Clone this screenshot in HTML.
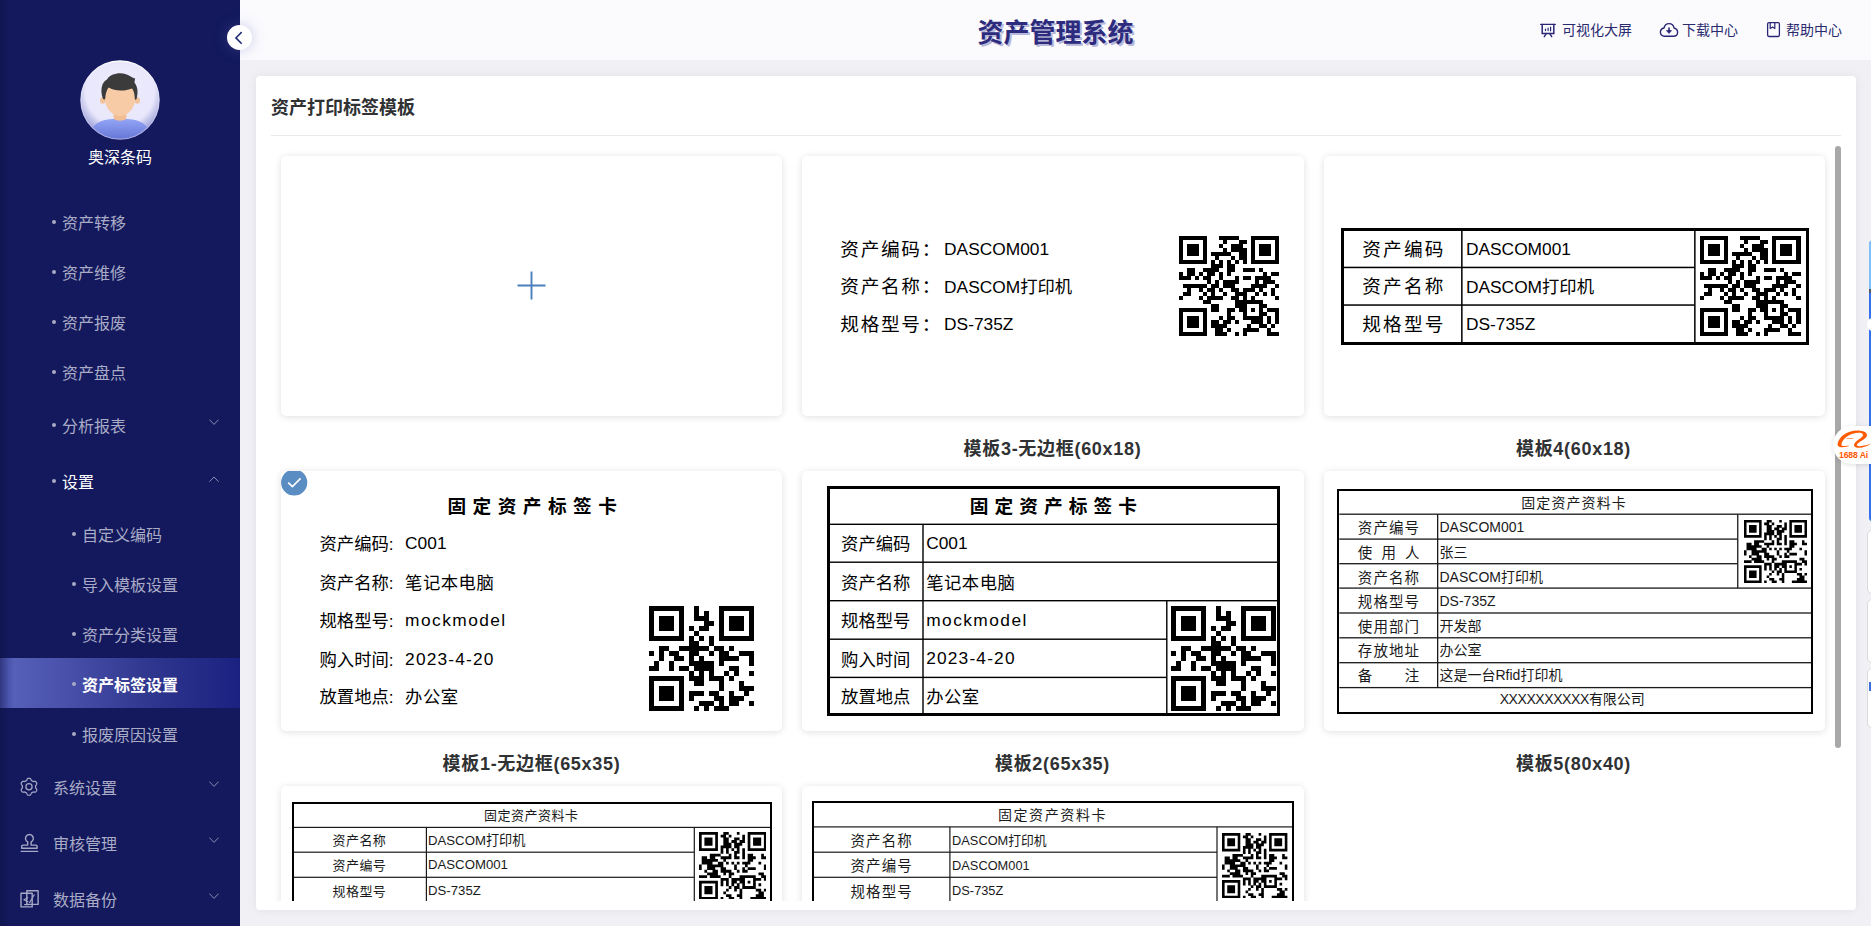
<!DOCTYPE html>
<html lang="zh-CN">
<head>
<meta charset="utf-8">
<title>资产管理系统</title>
<style>
*{box-sizing:border-box;margin:0;padding:0}
html,body{width:1871px;height:926px;overflow:hidden}
body{position:relative;background:#f1f1f5;font-family:"Liberation Sans","Noto Sans CJK SC",sans-serif;color:#000;-webkit-font-smoothing:antialiased}
.abs{position:absolute}
/* sidebar */
#side{position:absolute;left:0;top:0;width:240px;height:926px;background:#13195c;z-index:5}
#avatar{position:absolute;left:80px;top:59.7px;width:80px;height:80px}
#uname{position:absolute;left:0;top:147px;width:240px;text-align:center;color:#fff;font-size:16px;line-height:22px}
.mi{position:absolute;left:0;width:240px;color:#aaacc7;font-size:16px;white-space:nowrap}
.mi .t{position:absolute;top:0;height:100%;display:flex;align-items:center;padding-top:2px}
.mi.h50{height:50px}
.mi.h56{height:56px}
.mi .dot{position:absolute;top:50%;width:4px;height:4px;border-radius:50%;background:#a9abc6;margin-top:-1px}
.mi.on{color:#fff}
.mi.act{color:#fff;font-weight:bold;background:linear-gradient(90deg,#3d4499 0,#5560b8 6%,#4a52ac 25%,#31388f 60%,#1a2181 100%)}
.chev{position:absolute;left:209.2px;width:10px;height:6.4px}
/* header */
#head{position:absolute;left:240px;top:0;width:1631px;height:60px;background:#fbfbfe}
#ttl{position:absolute;left:0;top:13px;width:1631px;text-align:center;font-size:26px;line-height:40px;font-weight:bold;color:#2c2b7d;text-shadow:2px 2px 0 #b9b8d8;letter-spacing:0}
.hl{position:absolute;top:20px;font-size:14px;line-height:20px;color:#2a2a6e;white-space:nowrap}
#colbtn{position:absolute;left:227px;top:25px;width:25px;height:25px;border-radius:50%;background:#fff;box-shadow:0 0 14px rgba(110,105,190,.35);z-index:9}
/* main */
#main{position:absolute;left:256px;top:76px;width:1600px;height:834px;background:#fff;border-radius:4px;box-shadow:0 0 10px rgba(150,150,175,.2)}
#ptitle{position:absolute;left:15px;top:19px;font-size:18px;line-height:26px;font-weight:bold;color:#303133}
#pline{position:absolute;left:15px;top:58.5px;width:1570px;height:1px;background:#ebebef}
#scroll{position:absolute;left:15px;top:70px;width:1570px;height:754.5px;overflow:hidden}
.card{position:absolute;width:501.3px;height:260px;background:#fff;border-radius:5px;box-shadow:0 1px 7px rgba(0,0,0,.13);overflow:hidden}
.cap{position:absolute;width:521px;text-align:center;font-size:18px;line-height:26px;font-weight:bold;color:#303133;letter-spacing:.7px;margin-top:1px}
.lab{position:absolute;color:#000;white-space:nowrap}
.ep{left:1866.6px;width:8px;background:#fff;border:1px solid #d9d9de;border-radius:5px 0 0 5px}
#sbar{position:absolute;left:1563.8px;top:0;width:6px;height:602px;border-radius:3px;background:#a8a8a8}
</style>
</head>
<body>
<div id="head">
  <div id="ttl">资产管理系统</div>

  <svg class="abs" style="left:1299px;top:21px;width:18px;height:18px" viewBox="0 0 18 18"><g fill="none" stroke="#2b2776" stroke-width="1.3" stroke-linecap="round"><path d="M1.7 3.4 H16.3"/><path d="M3.2 3.6 V12.5 H14.8 V3.6" stroke-width="1.5"/><path d="M7.2 12.6 L5.3 15.7 M10.8 12.6 L12.7 15.7" stroke-width="1.4"/><path d="M6.5 8 V9.6 M9.1 7.1 V9.6 M11.6 6.1 V9.8" stroke-width="1.2"/></g></svg>
  <svg class="abs" style="left:1418px;top:20px;width:22px;height:20px" viewBox="0 0 22 20"><g fill="none" stroke="#2b2776" stroke-width="1.4" stroke-linejoin="round"><path d="M6.6 16.3 C3.8 16.3 2.4 14.3 2.4 12.2 C2.4 10 4 8.4 6 8 C6.6 5.2 8.6 3.6 11 3.6 C13.6 3.6 15.6 5.2 16 8 C18.2 8.6 19.6 10.2 19.6 12.3 C19.6 14.5 18 16.3 15.4 16.3 Z"/><path d="M11 7.4 V11.6" stroke-width="1.6"/><path d="M8.5 10.6 H13.5 L11 13.4Z" fill="#2b2776" stroke-width="0.8"/></g></svg>
  <svg class="abs" style="left:1525px;top:20px;width:16px;height:20px" viewBox="0 0 16 20"><g fill="none" stroke="#2b2776" stroke-width="1.3" stroke-linejoin="round"><rect x="2.6" y="2.6" width="11.8" height="13.9" rx="1.4"/><path d="M5.2 2.8 V8.6 L7.5 7 L9.8 8.6 V2.8" stroke-width="1.2"/></g></svg>
  <div class="hl" style="left:1322px">可视化大屏</div>
  <div class="hl" style="left:1442px">下载中心</div>
  <div class="hl" style="left:1546px">帮助中心</div>
</div>
<div id="side">
<div class="abs" style="left:0;top:0;width:9px;height:926px;background:linear-gradient(90deg,rgba(8,10,40,.22),rgba(8,10,40,0));z-index:2"></div>
<svg id="avatar" viewBox="0 0 80 80" width="80" height="80">
<defs>
<radialGradient id="avbg" cx="50%" cy="38%" r="62%"><stop offset="0" stop-color="#efeefe"/><stop offset="0.72" stop-color="#e8e7fb"/><stop offset="0.9" stop-color="#b4b5e4"/><stop offset="1" stop-color="#8e90d0"/></radialGradient>
<linearGradient id="avrim" x1="0" y1="0" x2="0" y2="1"><stop offset="0" stop-color="#ffffff"/><stop offset="0.5" stop-color="#dcdcf6"/><stop offset="1" stop-color="#a9abe2"/></linearGradient>
<linearGradient id="shirt" x1="0" y1="0" x2="0" y2="1"><stop offset="0" stop-color="#93a5f6"/><stop offset="1" stop-color="#5f6fd2"/></linearGradient>
<clipPath id="avc"><circle cx="40" cy="40" r="38.6"/></clipPath>
</defs>
<circle cx="40" cy="40" r="39.7" fill="url(#avrim)"/>
<circle cx="40" cy="40" r="38.6" fill="url(#avbg)"/>
<g clip-path="url(#avc)">
<path d="M12 70 C14 62 24 59.5 33 59 L47 59 C56 59.5 66 62 68 70 L68 82 L12 82Z" fill="url(#shirt)"/>
<path d="M33.6 52 L33.6 58.5 C36 61.5 44 61.5 46.4 58.5 L46.4 52Z" fill="#f3bd94"/>
<ellipse cx="22.6" cy="40.5" rx="2.6" ry="3.2" fill="#f3c29b"/>
<ellipse cx="57.4" cy="40.5" rx="2.6" ry="3.2" fill="#f3c29b"/>
<path d="M24.4 36 C24.4 25 30 21 40 21 C50 21 55.6 25 55.6 36 C55.6 47 49 56 40 56 C31 56 24.4 47 24.4 36Z" fill="#f7cba6"/>
<path d="M22.8 38.5 C20 30 21.5 22.5 27 19.5 C30 14 39 12 46 14.2 C49.5 15.3 52 17.6 55.2 18.5 C54.6 20 54.8 21.5 54.4 22.6 C57.6 26.5 58.4 32 56.6 38.8 C55.8 40.4 55 39.8 54.8 38.4 C54.6 34 54 31 52 28.4 C46 31 35 31.6 28.6 27.6 C26.6 30 25.6 34 25.2 38.4 C25 39.8 23.6 40.2 22.8 38.5Z" fill="#3b3b3b"/>
</g>
</svg>
<div id="uname">奥深条码</div>
<div class="mi h50 " style="top:196px"><span class="dot" style="left:51.5px"></span><span class="t" style="left:62px">资产转移</span></div>
<div class="mi h50 " style="top:246px"><span class="dot" style="left:51.5px"></span><span class="t" style="left:62px">资产维修</span></div>
<div class="mi h50 " style="top:296px"><span class="dot" style="left:51.5px"></span><span class="t" style="left:62px">资产报废</span></div>
<div class="mi h50 " style="top:346px"><span class="dot" style="left:51.5px"></span><span class="t" style="left:62px">资产盘点</span></div>
<div class="mi h56 " style="top:396px"><span class="dot" style="left:51.5px"></span><span class="t" style="left:62px">分析报表</span><svg class="chev" style="top:23.4px" viewBox="0 0 10 6.4"><path d="M0.4 0.6 L5 5.4 L9.6 0.6" fill="none" stroke="#8b8fb4" stroke-width="1"/></svg></div>
<div class="mi h56 on" style="top:452px"><span class="dot" style="left:51.5px"></span><span class="t" style="left:62px">设置</span><svg class="chev" style="top:24.2px" viewBox="0 0 10 6.4"><path d="M0.4 5.8 L5 1 L9.6 5.8" fill="none" stroke="#8b8fb4" stroke-width="1"/></svg></div>
<div class="mi h50 " style="top:508px"><span class="dot" style="left:71.5px"></span><span class="t" style="left:82px">自定义编码</span></div>
<div class="mi h50 " style="top:558px"><span class="dot" style="left:71.5px"></span><span class="t" style="left:82px">导入模板设置</span></div>
<div class="mi h50 " style="top:608px"><span class="dot" style="left:71.5px"></span><span class="t" style="left:82px">资产分类设置</span></div>
<div class="mi h50 act" style="top:658px"><span class="dot" style="left:71.5px"></span><span class="t" style="left:82px">资产标签设置</span></div>
<div class="mi h50 " style="top:708px"><span class="dot" style="left:71.5px"></span><span class="t" style="left:82px">报废原因设置</span></div>
<div class="mi h56 " style="top:758px"><svg viewBox="0 0 20 20" style="position:absolute;left:19px;top:19px;width:20px;height:20px"><g fill="none" stroke="#a6a8c6" stroke-width="1.25" stroke-linejoin="round"><path d="M16.60 9.75 L16.59 9.40 L16.56 9.06 L16.63 8.70 L16.95 8.27 L17.29 7.80 L17.60 7.28 L17.83 6.74 L17.77 6.29 L17.57 5.89 L17.36 5.50 L17.13 5.12 L16.88 4.75 L16.52 4.47 L15.94 4.40 L15.34 4.41 L14.76 4.47 L14.22 4.53 L13.88 4.41 L13.59 4.21 L13.30 4.03 L13.00 3.87 L12.68 3.72 L12.41 3.48 L12.20 2.99 L11.95 2.46 L11.66 1.93 L11.31 1.47 L10.89 1.30 L10.44 1.26 L10.00 1.25 L9.56 1.26 L9.11 1.30 L8.69 1.47 L8.34 1.93 L8.05 2.46 L7.80 2.99 L7.59 3.48 L7.32 3.72 L7.00 3.87 L6.70 4.03 L6.41 4.21 L6.12 4.41 L5.78 4.53 L5.24 4.47 L4.66 4.41 L4.06 4.40 L3.48 4.47 L3.12 4.75 L2.87 5.12 L2.64 5.50 L2.43 5.89 L2.23 6.29 L2.17 6.74 L2.40 7.28 L2.71 7.80 L3.05 8.27 L3.37 8.70 L3.44 9.06 L3.41 9.40 L3.40 9.75 L3.41 10.10 L3.44 10.44 L3.37 10.80 L3.05 11.23 L2.71 11.70 L2.40 12.22 L2.17 12.76 L2.23 13.21 L2.43 13.61 L2.64 14.00 L2.87 14.38 L3.12 14.75 L3.48 15.03 L4.06 15.10 L4.66 15.09 L5.24 15.03 L5.78 14.97 L6.12 15.09 L6.41 15.29 L6.70 15.47 L7.00 15.63 L7.32 15.78 L7.59 16.02 L7.80 16.51 L8.05 17.04 L8.34 17.57 L8.69 18.03 L9.11 18.20 L9.56 18.24 L10.00 18.25 L10.44 18.24 L10.89 18.20 L11.31 18.03 L11.66 17.57 L11.95 17.04 L12.20 16.51 L12.41 16.02 L12.68 15.78 L13.00 15.63 L13.30 15.47 L13.59 15.29 L13.88 15.09 L14.22 14.97 L14.76 15.03 L15.34 15.09 L15.94 15.10 L16.52 15.03 L16.88 14.75 L17.13 14.38 L17.36 14.00 L17.57 13.61 L17.77 13.21 L17.83 12.76 L17.60 12.22 L17.29 11.70 L16.95 11.23 L16.63 10.80 L16.56 10.44 L16.59 10.10Z"/><circle cx="10" cy="9.75" r="3.1"/></g></svg><span class="t" style="left:53px">系统设置</span><svg class="chev" style="top:23.4px" viewBox="0 0 10 6.4"><path d="M0.4 0.6 L5 5.4 L9.6 0.6" fill="none" stroke="#8b8fb4" stroke-width="1"/></svg></div>
<div class="mi h56 " style="top:814px"><svg viewBox="0 0 20 20" style="position:absolute;left:19px;top:19px;width:20px;height:20px"><g fill="none" stroke="#a6a8c6" stroke-width="1.4" stroke-linejoin="round" stroke-linecap="round"><path d="M2.7 15.3 V13.3 a1.2 1.2 0 0 1 1.2-1.2 H8.7 V8.95 A3.9 3.9 0 1 1 12.1 8.95 V12.1 H16.9 a1.2 1.2 0 0 1 1.2 1.2 V15.3 Z"/><path d="M2.2 18.4 H18.6"/></g></svg><span class="t" style="left:53px">审核管理</span><svg class="chev" style="top:23.4px" viewBox="0 0 10 6.4"><path d="M0.4 0.6 L5 5.4 L9.6 0.6" fill="none" stroke="#8b8fb4" stroke-width="1"/></svg></div>
<div class="mi h56 " style="top:870px"><svg viewBox="0 0 20 20" style="position:absolute;left:19px;top:19px;width:20px;height:20px"><g fill="none" stroke="#a6a8c6" stroke-width="1.4" stroke-linejoin="round" stroke-linecap="round"><path d="M7.8 1.7 H19.1 V15.4 H7.8Z"/><path d="M2 4.2 H13.2 V17.9 H2Z"/><path d="M15.2 5.8 L10.6 13.6 M8.8 8.8 L4.9 10.8 L8.8 12.8 M5.6 15.6 H9.8" stroke-width="1.2"/></g></svg><span class="t" style="left:53px">数据备份</span><svg class="chev" style="top:23.4px" viewBox="0 0 10 6.4"><path d="M0.4 0.6 L5 5.4 L9.6 0.6" fill="none" stroke="#8b8fb4" stroke-width="1"/></svg></div>
</div>
<div id="colbtn"><svg viewBox="0 0 25 25" width="25" height="25"><path d="M14.7 7.1 L8.9 12.9 L14.7 18.7" fill="none" stroke="#1d2a70" stroke-width="1.5"/></svg></div>
<div id="main">
  <div id="ptitle">资产打印标签模板</div>
  <div id="pline"></div>
  <div id="scroll">
    <div class="card" style="left:10px;top:10px" id="c1"><!--c1--><svg class="abs" style="left:236px;top:114.8px;width:29px;height:29px" viewBox="0 0 29 29"><path d="M14.5 0.5V28.5M0.5 14.5H28.5" stroke="#4d7fbd" stroke-width="1.9" fill="none"/></svg><!--/c1--></div>
    <div class="card" style="left:531.3px;top:10px" id="c2"><!--c2--><div class="lab" style="top:80.0px;font-size:18.67px;line-height:28px;letter-spacing:1.7px;left:38.0px;">资产编码：</div><div class="lab" style="top:79.8px;font-size:17.33px;line-height:26px;left:141.8px;">DASCOM001</div><div class="lab" style="top:117.0px;font-size:18.67px;line-height:28px;letter-spacing:1.7px;left:38.0px;">资产名称：</div><div class="lab" style="top:118.0px;font-size:17.33px;line-height:26px;left:141.8px;">DASCOM打印机</div><div class="lab" style="top:154.8px;font-size:18.67px;line-height:28px;letter-spacing:1.7px;left:38.0px;">规格型号：</div><div class="lab" style="top:154.6px;font-size:17.33px;line-height:26px;left:141.8px;">DS-735Z</div><svg class="abs" style="left:376.5px;top:79.6px;width:100.5px;height:100.5px" viewBox="0 0 25 25" shape-rendering="crispEdges"><path d="M0 0h7v1h-7zM10 0h5v1h-5zM18 0h7v1h-7zM0 1h1v1h-1zM6 1h1v1h-1zM11 1h1v1h-1zM15 1h2v1h-2zM18 1h1v1h-1zM24 1h1v1h-1zM0 2h1v1h-1zM2 2h3v1h-3zM6 2h1v1h-1zM10 2h1v1h-1zM13 2h3v1h-3zM18 2h1v1h-1zM20 2h3v1h-3zM24 2h1v1h-1zM0 3h1v1h-1zM2 3h3v1h-3zM6 3h1v1h-1zM11 3h1v1h-1zM13 3h4v1h-4zM18 3h1v1h-1zM20 3h3v1h-3zM24 3h1v1h-1zM0 4h1v1h-1zM2 4h3v1h-3zM6 4h1v1h-1zM8 4h5v1h-5zM15 4h2v1h-2zM18 4h1v1h-1zM20 4h3v1h-3zM24 4h1v1h-1zM0 5h1v1h-1zM6 5h1v1h-1zM9 5h1v1h-1zM13 5h1v1h-1zM15 5h2v1h-2zM18 5h1v1h-1zM24 5h1v1h-1zM0 6h7v1h-7zM8 6h1v1h-1zM10 6h1v1h-1zM12 6h1v1h-1zM14 6h1v1h-1zM16 6h1v1h-1zM18 6h7v1h-7zM8 7h3v1h-3zM12 7h2v1h-2zM2 8h2v1h-2zM6 8h4v1h-4zM12 8h2v1h-2zM16 8h3v1h-3zM20 8h1v1h-1zM0 9h1v1h-1zM2 9h2v1h-2zM5 9h1v1h-1zM7 9h2v1h-2zM10 9h1v1h-1zM12 9h1v1h-1zM21 9h1v1h-1zM23 9h2v1h-2zM0 10h3v1h-3zM4 10h1v1h-1zM6 10h2v1h-2zM10 10h1v1h-1zM14 10h1v1h-1zM16 10h2v1h-2zM19 10h4v1h-4zM7 11h1v1h-1zM9 11h1v1h-1zM11 11h4v1h-4zM19 11h1v1h-1zM21 11h3v1h-3zM1 12h6v1h-6zM8 12h2v1h-2zM11 12h3v1h-3zM18 12h4v1h-4zM24 12h1v1h-1zM2 13h1v1h-1zM5 13h1v1h-1zM7 13h2v1h-2zM10 13h1v1h-1zM13 13h2v1h-2zM16 13h3v1h-3zM20 13h1v1h-1zM23 13h1v1h-1zM1 14h2v1h-2zM6 14h1v1h-1zM8 14h1v1h-1zM11 14h1v1h-1zM14 14h3v1h-3zM19 14h1v1h-1zM21 14h1v1h-1zM23 14h1v1h-1zM0 15h1v1h-1zM5 15h1v1h-1zM7 15h4v1h-4zM13 15h2v1h-2zM16 15h1v1h-1zM18 15h1v1h-1zM24 15h1v1h-1zM6 16h2v1h-2zM14 16h7v1h-7zM8 17h2v1h-2zM14 17h3v1h-3zM20 17h2v1h-2zM0 18h7v1h-7zM8 18h2v1h-2zM12 18h2v1h-2zM15 18h2v1h-2zM18 18h1v1h-1zM20 18h1v1h-1zM22 18h3v1h-3zM0 19h1v1h-1zM6 19h1v1h-1zM12 19h1v1h-1zM16 19h1v1h-1zM20 19h2v1h-2zM24 19h1v1h-1zM0 20h1v1h-1zM2 20h3v1h-3zM6 20h1v1h-1zM10 20h1v1h-1zM12 20h2v1h-2zM16 20h5v1h-5zM22 20h1v1h-1zM24 20h1v1h-1zM0 21h1v1h-1zM2 21h3v1h-3zM6 21h1v1h-1zM8 21h2v1h-2zM11 21h2v1h-2zM14 21h1v1h-1zM18 21h3v1h-3zM22 21h1v1h-1zM24 21h1v1h-1zM0 22h1v1h-1zM2 22h3v1h-3zM6 22h1v1h-1zM8 22h4v1h-4zM17 22h1v1h-1zM20 22h2v1h-2zM23 22h1v1h-1zM0 23h1v1h-1zM6 23h1v1h-1zM9 23h2v1h-2zM12 23h1v1h-1zM16 23h4v1h-4zM22 23h1v1h-1zM0 24h7v1h-7zM9 24h3v1h-3zM14 24h1v1h-1zM16 24h1v1h-1zM22 24h3v1h-3z" fill="#000"/></svg><!--/c2--></div>
    <div class="card" style="left:1052.7px;top:10px" id="c3"><!--c3--><svg class="abs" style="left:0;top:0;width:502px;height:260px" viewBox="0 0 502 260"><rect x="137.10" y="72.00" width="1.50" height="116.60" fill="#000"/><rect x="370.10" y="72.00" width="1.50" height="116.60" fill="#000"/><rect x="17.30" y="110.70" width="353.00" height="1.50" fill="#000"/><rect x="17.30" y="148.30" width="353.00" height="1.50" fill="#000"/></svg><div class="abs" style="left:17.3px;top:72px;width:467.8px;height:116.6px;border:3px solid #000"></div><div class="lab" style="top:80.3px;font-size:18.67px;line-height:28px;letter-spacing:2.2px;left:38.5px;">资产编码</div><div class="lab" style="top:80.1px;font-size:17.33px;line-height:26px;left:142.3px;">DASCOM001</div><div class="lab" style="top:117.4px;font-size:18.67px;line-height:28px;letter-spacing:2.2px;left:38.5px;">资产名称</div><div class="lab" style="top:118.4px;font-size:17.33px;line-height:26px;left:142.3px;">DASCOM打印机</div><div class="lab" style="top:155.2px;font-size:18.67px;line-height:28px;letter-spacing:2.2px;left:38.5px;">规格型号</div><div class="lab" style="top:155.0px;font-size:17.33px;line-height:26px;left:142.3px;">DS-735Z</div><svg class="abs" style="left:376.5px;top:79.6px;width:100.5px;height:100.5px" viewBox="0 0 25 25" shape-rendering="crispEdges"><path d="M0 0h7v1h-7zM10 0h5v1h-5zM18 0h7v1h-7zM0 1h1v1h-1zM6 1h1v1h-1zM11 1h1v1h-1zM15 1h2v1h-2zM18 1h1v1h-1zM24 1h1v1h-1zM0 2h1v1h-1zM2 2h3v1h-3zM6 2h1v1h-1zM10 2h1v1h-1zM13 2h3v1h-3zM18 2h1v1h-1zM20 2h3v1h-3zM24 2h1v1h-1zM0 3h1v1h-1zM2 3h3v1h-3zM6 3h1v1h-1zM11 3h1v1h-1zM13 3h4v1h-4zM18 3h1v1h-1zM20 3h3v1h-3zM24 3h1v1h-1zM0 4h1v1h-1zM2 4h3v1h-3zM6 4h1v1h-1zM8 4h5v1h-5zM15 4h2v1h-2zM18 4h1v1h-1zM20 4h3v1h-3zM24 4h1v1h-1zM0 5h1v1h-1zM6 5h1v1h-1zM9 5h1v1h-1zM13 5h1v1h-1zM15 5h2v1h-2zM18 5h1v1h-1zM24 5h1v1h-1zM0 6h7v1h-7zM8 6h1v1h-1zM10 6h1v1h-1zM12 6h1v1h-1zM14 6h1v1h-1zM16 6h1v1h-1zM18 6h7v1h-7zM8 7h3v1h-3zM12 7h2v1h-2zM2 8h2v1h-2zM6 8h4v1h-4zM12 8h2v1h-2zM16 8h3v1h-3zM20 8h1v1h-1zM0 9h1v1h-1zM2 9h2v1h-2zM5 9h1v1h-1zM7 9h2v1h-2zM10 9h1v1h-1zM12 9h1v1h-1zM21 9h1v1h-1zM23 9h2v1h-2zM0 10h3v1h-3zM4 10h1v1h-1zM6 10h2v1h-2zM10 10h1v1h-1zM14 10h1v1h-1zM16 10h2v1h-2zM19 10h4v1h-4zM7 11h1v1h-1zM9 11h1v1h-1zM11 11h4v1h-4zM19 11h1v1h-1zM21 11h3v1h-3zM1 12h6v1h-6zM8 12h2v1h-2zM11 12h3v1h-3zM18 12h4v1h-4zM24 12h1v1h-1zM2 13h1v1h-1zM5 13h1v1h-1zM7 13h2v1h-2zM10 13h1v1h-1zM13 13h2v1h-2zM16 13h3v1h-3zM20 13h1v1h-1zM23 13h1v1h-1zM1 14h2v1h-2zM6 14h1v1h-1zM8 14h1v1h-1zM11 14h1v1h-1zM14 14h3v1h-3zM19 14h1v1h-1zM21 14h1v1h-1zM23 14h1v1h-1zM0 15h1v1h-1zM5 15h1v1h-1zM7 15h4v1h-4zM13 15h2v1h-2zM16 15h1v1h-1zM18 15h1v1h-1zM24 15h1v1h-1zM6 16h2v1h-2zM14 16h7v1h-7zM8 17h2v1h-2zM14 17h3v1h-3zM20 17h2v1h-2zM0 18h7v1h-7zM8 18h2v1h-2zM12 18h2v1h-2zM15 18h2v1h-2zM18 18h1v1h-1zM20 18h1v1h-1zM22 18h3v1h-3zM0 19h1v1h-1zM6 19h1v1h-1zM12 19h1v1h-1zM16 19h1v1h-1zM20 19h2v1h-2zM24 19h1v1h-1zM0 20h1v1h-1zM2 20h3v1h-3zM6 20h1v1h-1zM10 20h1v1h-1zM12 20h2v1h-2zM16 20h5v1h-5zM22 20h1v1h-1zM24 20h1v1h-1zM0 21h1v1h-1zM2 21h3v1h-3zM6 21h1v1h-1zM8 21h2v1h-2zM11 21h2v1h-2zM14 21h1v1h-1zM18 21h3v1h-3zM22 21h1v1h-1zM24 21h1v1h-1zM0 22h1v1h-1zM2 22h3v1h-3zM6 22h1v1h-1zM8 22h4v1h-4zM17 22h1v1h-1zM20 22h2v1h-2zM23 22h1v1h-1zM0 23h1v1h-1zM6 23h1v1h-1zM9 23h2v1h-2zM12 23h1v1h-1zM16 23h4v1h-4zM22 23h1v1h-1zM0 24h7v1h-7zM9 24h3v1h-3zM14 24h1v1h-1zM16 24h1v1h-1zM22 24h3v1h-3z" fill="#000"/></svg><!--/c3--></div>
    <div class="cap" style="left:521px;top:289px">模板3-无边框(60x18)</div>
    <div class="cap" style="left:1042px;top:289px">模板4(60x18)</div>
    <div class="card" style="left:10px;top:325px" id="c4"><!--c4--><svg class="abs" style="left:0;top:-2.4px;width:27px;height:27px;z-index:3" viewBox="0 0 27 27"><circle cx="13.2" cy="13.5" r="13.1" fill="#5a8dc1"/><path d="M7.2 13.6 L11.4 17.6 L19.6 9.4" fill="none" stroke="#fff" stroke-width="1.7"/></svg><div class="lab" style="top:21.5px;font-size:18.67px;line-height:28px;letter-spacing:6.45px;font-weight:bold;left:166.5px;">固定资产标签卡</div><div class="lab" style="top:59.9px;font-size:17.33px;line-height:26px;left:38.5px;">资产编码:</div><div class="lab" style="top:58.7px;font-size:17.33px;line-height:26px;left:124.1px;">C001</div><div class="lab" style="top:98.7px;font-size:17.33px;line-height:26px;left:38.5px;">资产名称:</div><div class="lab" style="top:98.7px;font-size:17.33px;line-height:26px;letter-spacing:0.5px;left:124.1px;">笔记本电脑</div><div class="lab" style="top:137.2px;font-size:17.33px;line-height:26px;left:38.5px;">规格型号:</div><div class="lab" style="top:136.0px;font-size:17.33px;line-height:26px;letter-spacing:1.44px;left:124.1px;">mockmodel</div><div class="lab" style="top:175.7px;font-size:17.33px;line-height:26px;left:38.5px;">购入时间:</div><div class="lab" style="top:174.5px;font-size:17.33px;line-height:26px;letter-spacing:1.17px;left:124.1px;">2023-4-20</div><div class="lab" style="top:213.2px;font-size:17.33px;line-height:26px;left:38.5px;">放置地点:</div><div class="lab" style="top:213.2px;font-size:17.33px;line-height:26px;letter-spacing:0.5px;left:124.1px;">办公室</div><svg class="abs" style="left:368px;top:135px;width:105px;height:105px" viewBox="0 0 21 21" shape-rendering="crispEdges"><path d="M0 0h7v1h-7zM9 0h1v1h-1zM14 0h7v1h-7zM0 1h1v1h-1zM6 1h1v1h-1zM9 1h1v1h-1zM11 1h1v1h-1zM14 1h1v1h-1zM20 1h1v1h-1zM0 2h1v1h-1zM2 2h3v1h-3zM6 2h1v1h-1zM9 2h3v1h-3zM14 2h1v1h-1zM16 2h3v1h-3zM20 2h1v1h-1zM0 3h1v1h-1zM2 3h3v1h-3zM6 3h1v1h-1zM11 3h2v1h-2zM14 3h1v1h-1zM16 3h3v1h-3zM20 3h1v1h-1zM0 4h1v1h-1zM2 4h3v1h-3zM6 4h1v1h-1zM8 4h1v1h-1zM10 4h2v1h-2zM14 4h1v1h-1zM16 4h3v1h-3zM20 4h1v1h-1zM0 5h1v1h-1zM6 5h1v1h-1zM9 5h1v1h-1zM14 5h1v1h-1zM20 5h1v1h-1zM0 6h7v1h-7zM8 6h1v1h-1zM10 6h1v1h-1zM12 6h1v1h-1zM14 6h7v1h-7zM8 7h2v1h-2zM12 7h1v1h-1zM2 8h2v1h-2zM6 8h6v1h-6zM13 8h2v1h-2zM16 8h1v1h-1zM0 9h1v1h-1zM2 9h1v1h-1zM4 9h2v1h-2zM8 9h2v1h-2zM12 9h1v1h-1zM14 9h2v1h-2zM18 9h3v1h-3zM2 10h1v1h-1zM5 10h2v1h-2zM8 10h1v1h-1zM10 10h1v1h-1zM14 10h4v1h-4zM20 10h1v1h-1zM1 11h1v1h-1zM4 11h1v1h-1zM8 11h5v1h-5zM14 11h1v1h-1zM20 11h1v1h-1zM0 12h2v1h-2zM4 12h1v1h-1zM6 12h2v1h-2zM9 12h4v1h-4zM16 12h2v1h-2zM8 13h1v1h-1zM10 13h1v1h-1zM12 13h1v1h-1zM15 13h1v1h-1zM17 13h1v1h-1zM20 13h1v1h-1zM0 14h7v1h-7zM8 14h3v1h-3zM12 14h3v1h-3zM16 14h1v1h-1zM0 15h1v1h-1zM6 15h1v1h-1zM9 15h2v1h-2zM14 15h1v1h-1zM18 15h1v1h-1zM0 16h1v1h-1zM2 16h3v1h-3zM6 16h1v1h-1zM14 16h1v1h-1zM18 16h3v1h-3zM0 17h1v1h-1zM2 17h3v1h-3zM6 17h1v1h-1zM8 17h3v1h-3zM12 17h2v1h-2zM16 17h1v1h-1zM19 17h1v1h-1zM0 18h1v1h-1zM2 18h3v1h-3zM6 18h1v1h-1zM8 18h1v1h-1zM13 18h2v1h-2zM16 18h3v1h-3zM0 19h1v1h-1zM6 19h1v1h-1zM10 19h3v1h-3zM14 19h1v1h-1zM16 19h2v1h-2zM20 19h1v1h-1zM0 20h7v1h-7zM9 20h1v1h-1zM11 20h1v1h-1zM13 20h3v1h-3z" fill="#000"/></svg><!--/c4--></div>
    <div class="card" style="left:531.3px;top:325px" id="c5"><!--c5--><svg class="abs" style="left:0;top:0;width:502px;height:260px" viewBox="0 0 502 260"><rect x="25.70" y="52.60" width="450.00" height="1.40" fill="#000"/><rect x="25.70" y="90.50" width="450.00" height="1.40" fill="#000"/><rect x="25.70" y="129.00" width="450.00" height="1.40" fill="#000"/><rect x="25.70" y="167.50" width="339.10" height="1.40" fill="#000"/><rect x="25.70" y="205.70" width="339.10" height="1.40" fill="#000"/><rect x="120.30" y="53.30" width="1.40" height="191.70" fill="#000"/><rect x="364.10" y="129.70" width="1.40" height="115.30" fill="#000"/></svg><div class="abs" style="left:24.8px;top:15.3px;width:452.5px;height:230.1px;border:3px solid #000"></div><div class="lab" style="top:21.6px;font-size:18.67px;line-height:28px;letter-spacing:6.1px;font-weight:bold;left:167.4px;">固定资产标签卡</div><div class="lab" style="top:60.4px;font-size:17.33px;line-height:26px;left:38.8px;">资产编码</div><div class="lab" style="top:59.2px;font-size:17.33px;line-height:26px;left:123.9px;">C001</div><div class="lab" style="top:98.8px;font-size:17.33px;line-height:26px;left:38.8px;">资产名称</div><div class="lab" style="top:98.8px;font-size:17.33px;line-height:26px;letter-spacing:0.5px;left:123.9px;">笔记本电脑</div><div class="lab" style="top:137.2px;font-size:17.33px;line-height:26px;left:38.8px;">规格型号</div><div class="lab" style="top:136.0px;font-size:17.33px;line-height:26px;letter-spacing:1.44px;left:123.9px;">mockmodel</div><div class="lab" style="top:175.6px;font-size:17.33px;line-height:26px;left:38.8px;">购入时间</div><div class="lab" style="top:174.4px;font-size:17.33px;line-height:26px;letter-spacing:1.17px;left:123.9px;">2023-4-20</div><div class="lab" style="top:213.3px;font-size:17.33px;line-height:26px;left:38.8px;">放置地点</div><div class="lab" style="top:213.3px;font-size:17.33px;line-height:26px;letter-spacing:0.5px;left:123.9px;">办公室</div><svg class="abs" style="left:368.7px;top:135px;width:105px;height:105px" viewBox="0 0 21 21" shape-rendering="crispEdges"><path d="M0 0h7v1h-7zM9 0h1v1h-1zM14 0h7v1h-7zM0 1h1v1h-1zM6 1h1v1h-1zM9 1h1v1h-1zM11 1h1v1h-1zM14 1h1v1h-1zM20 1h1v1h-1zM0 2h1v1h-1zM2 2h3v1h-3zM6 2h1v1h-1zM9 2h3v1h-3zM14 2h1v1h-1zM16 2h3v1h-3zM20 2h1v1h-1zM0 3h1v1h-1zM2 3h3v1h-3zM6 3h1v1h-1zM11 3h2v1h-2zM14 3h1v1h-1zM16 3h3v1h-3zM20 3h1v1h-1zM0 4h1v1h-1zM2 4h3v1h-3zM6 4h1v1h-1zM8 4h1v1h-1zM10 4h2v1h-2zM14 4h1v1h-1zM16 4h3v1h-3zM20 4h1v1h-1zM0 5h1v1h-1zM6 5h1v1h-1zM9 5h1v1h-1zM14 5h1v1h-1zM20 5h1v1h-1zM0 6h7v1h-7zM8 6h1v1h-1zM10 6h1v1h-1zM12 6h1v1h-1zM14 6h7v1h-7zM8 7h2v1h-2zM12 7h1v1h-1zM2 8h2v1h-2zM6 8h6v1h-6zM13 8h2v1h-2zM16 8h1v1h-1zM0 9h1v1h-1zM2 9h1v1h-1zM4 9h2v1h-2zM8 9h2v1h-2zM12 9h1v1h-1zM14 9h2v1h-2zM18 9h3v1h-3zM2 10h1v1h-1zM5 10h2v1h-2zM8 10h1v1h-1zM10 10h1v1h-1zM14 10h4v1h-4zM20 10h1v1h-1zM1 11h1v1h-1zM4 11h1v1h-1zM8 11h5v1h-5zM14 11h1v1h-1zM20 11h1v1h-1zM0 12h2v1h-2zM4 12h1v1h-1zM6 12h2v1h-2zM9 12h4v1h-4zM16 12h2v1h-2zM8 13h1v1h-1zM10 13h1v1h-1zM12 13h1v1h-1zM15 13h1v1h-1zM17 13h1v1h-1zM20 13h1v1h-1zM0 14h7v1h-7zM8 14h3v1h-3zM12 14h3v1h-3zM16 14h1v1h-1zM0 15h1v1h-1zM6 15h1v1h-1zM9 15h2v1h-2zM14 15h1v1h-1zM18 15h1v1h-1zM0 16h1v1h-1zM2 16h3v1h-3zM6 16h1v1h-1zM14 16h1v1h-1zM18 16h3v1h-3zM0 17h1v1h-1zM2 17h3v1h-3zM6 17h1v1h-1zM8 17h3v1h-3zM12 17h2v1h-2zM16 17h1v1h-1zM19 17h1v1h-1zM0 18h1v1h-1zM2 18h3v1h-3zM6 18h1v1h-1zM8 18h1v1h-1zM13 18h2v1h-2zM16 18h3v1h-3zM0 19h1v1h-1zM6 19h1v1h-1zM10 19h3v1h-3zM14 19h1v1h-1zM16 19h2v1h-2zM20 19h1v1h-1zM0 20h7v1h-7zM9 20h1v1h-1zM11 20h1v1h-1zM13 20h3v1h-3z" fill="#000"/></svg><!--/c5--></div>
    <div class="card" style="left:1052.7px;top:325px" id="c6"><!--c6--><svg class="abs" style="left:0;top:0;width:502px;height:260px" viewBox="0 0 502 260"><rect x="15.30" y="42.55" width="472.00" height="1.30" fill="#1a1a1a"/><rect x="15.30" y="67.45" width="398.50" height="1.30" fill="#1a1a1a"/><rect x="15.30" y="92.05" width="398.50" height="1.30" fill="#1a1a1a"/><rect x="15.30" y="116.45" width="472.00" height="1.30" fill="#1a1a1a"/><rect x="15.30" y="141.35" width="472.00" height="1.30" fill="#1a1a1a"/><rect x="15.30" y="166.15" width="472.00" height="1.30" fill="#1a1a1a"/><rect x="15.30" y="191.05" width="472.00" height="1.30" fill="#1a1a1a"/><rect x="15.30" y="215.95" width="472.00" height="1.30" fill="#1a1a1a"/><rect x="113.00" y="43.20" width="1.30" height="173.40" fill="#1a1a1a"/><rect x="413.10" y="43.20" width="1.30" height="73.90" fill="#1a1a1a"/></svg><div class="abs" style="left:13.4px;top:18.1px;width:476.1px;height:224.7px;border:2.6px solid #000"></div><div class="lab" style="top:22.2px;font-size:14px;line-height:21px;letter-spacing:1.1px;color:#1a1a1a;left:197.5px;">固定资产资料卡</div><div class="lab" style="top:45.9px;font-size:14.5px;line-height:22px;letter-spacing:1.1px;color:#1a1a1a;left:34.1px;">资产编号</div><div class="lab" style="top:45.8px;font-size:14px;line-height:21px;color:#1a1a1a;left:115.8px;">DASCOM001</div><div class="lab" style="top:70.7px;font-size:14.5px;line-height:22px;letter-spacing:9.1px;color:#1a1a1a;left:34.1px;">使用人</div><div class="lab" style="top:70.9px;font-size:14px;line-height:21px;color:#1a1a1a;left:115.8px;">张三</div><div class="lab" style="top:95.6px;font-size:14.5px;line-height:22px;letter-spacing:1.1px;color:#1a1a1a;left:34.1px;">资产名称</div><div class="lab" style="top:95.8px;font-size:14px;line-height:21px;color:#1a1a1a;left:115.8px;">DASCOM打印机</div><div class="lab" style="top:120.3px;font-size:14.5px;line-height:22px;letter-spacing:1.1px;color:#1a1a1a;left:34.1px;">规格型号</div><div class="lab" style="top:120.2px;font-size:14px;line-height:21px;color:#1a1a1a;left:115.8px;">DS-735Z</div><div class="lab" style="top:144.7px;font-size:14.5px;line-height:22px;letter-spacing:1.1px;color:#1a1a1a;left:34.1px;">使用部门</div><div class="lab" style="top:144.9px;font-size:14px;line-height:21px;color:#1a1a1a;left:115.8px;">开发部</div><div class="lab" style="top:169.0px;font-size:14.5px;line-height:22px;letter-spacing:1.1px;color:#1a1a1a;left:34.1px;">存放地址</div><div class="lab" style="top:169.2px;font-size:14px;line-height:21px;color:#1a1a1a;left:115.8px;">办公室</div><div class="lab" style="top:193.7px;font-size:14.5px;line-height:22px;letter-spacing:32.4px;color:#1a1a1a;left:34.1px;">备注</div><div class="lab" style="top:193.9px;font-size:14px;line-height:21px;color:#1a1a1a;left:115.8px;">这是一台Rfid打印机</div><div class="lab" style="top:218.2px;font-size:14px;line-height:21px;color:#1a1a1a;left:176.0px;"><span style="letter-spacing:-0.42px">XXXXXXXXXX</span>有限公司</div><svg class="abs" style="left:420.1px;top:49px;width:63px;height:63px" viewBox="0 0 25 25"><path d="M0 0h7v1.04h-7zM9 0h2v1.04h-2zM14 0h1v1.04h-1zM18 0h7v1.04h-7zM0 1h1v1.04h-1zM6 1h1v1.04h-1zM8 1h2v1.04h-2zM11 1h1v1.04h-1zM16 1h1v1.04h-1zM18 1h1v1.04h-1zM24 1h1v1.04h-1zM0 2h1v1.04h-1zM2 2h3v1.04h-3zM6 2h1v1.04h-1zM9 2h2v1.04h-2zM13 2h2v1.04h-2zM16 2h1v1.04h-1zM18 2h1v1.04h-1zM20 2h3v1.04h-3zM24 2h1v1.04h-1zM0 3h1v1.04h-1zM2 3h3v1.04h-3zM6 3h1v1.04h-1zM9 3h2v1.04h-2zM12 3h2v1.04h-2zM15 3h2v1.04h-2zM18 3h1v1.04h-1zM20 3h3v1.04h-3zM24 3h1v1.04h-1zM0 4h1v1.04h-1zM2 4h3v1.04h-3zM6 4h1v1.04h-1zM9 4h3v1.04h-3zM13 4h3v1.04h-3zM18 4h1v1.04h-1zM20 4h3v1.04h-3zM24 4h1v1.04h-1zM0 5h1v1.04h-1zM6 5h1v1.04h-1zM8 5h4v1.04h-4zM13 5h2v1.04h-2zM18 5h1v1.04h-1zM24 5h1v1.04h-1zM0 6h7v1.04h-7zM8 6h1v1.04h-1zM10 6h1v1.04h-1zM12 6h1v1.04h-1zM14 6h1v1.04h-1zM16 6h1v1.04h-1zM18 6h7v1.04h-7zM8 7h1v1.04h-1zM10 7h1v1.04h-1zM13 7h2v1.04h-2zM16 7h1v1.04h-1zM4 8h4v1.04h-4zM11 8h1v1.04h-1zM13 8h1v1.04h-1zM16 8h1v1.04h-1zM18 8h2v1.04h-2zM23 8h1v1.04h-1zM1 9h2v1.04h-2zM4 9h2v1.04h-2zM8 9h4v1.04h-4zM13 9h2v1.04h-2zM16 9h1v1.04h-1zM18 9h3v1.04h-3zM23 9h2v1.04h-2zM1 10h6v1.04h-6zM9 10h1v1.04h-1zM18 10h2v1.04h-2zM1 11h4v1.04h-4zM7 11h2v1.04h-2zM10 11h1v1.04h-1zM12 11h1v1.04h-1zM14 11h1v1.04h-1zM16 11h3v1.04h-3zM22 11h1v1.04h-1zM0 12h1v1.04h-1zM3 12h6v1.04h-6zM13 12h1v1.04h-1zM17 12h1v1.04h-1zM24 12h1v1.04h-1zM0 13h1v1.04h-1zM3 13h3v1.04h-3zM8 13h2v1.04h-2zM13 13h1v1.04h-1zM16 13h1v1.04h-1zM18 13h3v1.04h-3zM24 13h1v1.04h-1zM2 14h1v1.04h-1zM5 14h2v1.04h-2zM8 14h4v1.04h-4zM14 14h1v1.04h-1zM16 14h2v1.04h-2zM3 15h4v1.04h-4zM9 15h1v1.04h-1zM11 15h2v1.04h-2zM22 15h2v1.04h-2zM0 16h3v1.04h-3zM4 16h4v1.04h-4zM11 16h1v1.04h-1zM15 16h6v1.04h-6zM23 16h2v1.04h-2zM8 17h3v1.04h-3zM12 17h5v1.04h-5zM20 17h3v1.04h-3zM24 17h1v1.04h-1zM0 18h7v1.04h-7zM8 18h1v1.04h-1zM10 18h1v1.04h-1zM12 18h2v1.04h-2zM15 18h2v1.04h-2zM18 18h1v1.04h-1zM20 18h1v1.04h-1zM0 19h1v1.04h-1zM6 19h1v1.04h-1zM8 19h1v1.04h-1zM10 19h1v1.04h-1zM12 19h1v1.04h-1zM14 19h1v1.04h-1zM16 19h1v1.04h-1zM20 19h1v1.04h-1zM22 19h1v1.04h-1zM0 20h1v1.04h-1zM2 20h3v1.04h-3zM6 20h1v1.04h-1zM11 20h1v1.04h-1zM13 20h2v1.04h-2zM16 20h5v1.04h-5zM0 21h1v1.04h-1zM2 21h3v1.04h-3zM6 21h1v1.04h-1zM10 21h1v1.04h-1zM13 21h1v1.04h-1zM15 21h1v1.04h-1zM21 21h2v1.04h-2zM24 21h1v1.04h-1zM0 22h1v1.04h-1zM2 22h3v1.04h-3zM6 22h1v1.04h-1zM9 22h1v1.04h-1zM15 22h1v1.04h-1zM22 22h2v1.04h-2zM0 23h1v1.04h-1zM6 23h1v1.04h-1zM10 23h2v1.04h-2zM14 23h2v1.04h-2zM21 23h3v1.04h-3zM0 24h7v1.04h-7zM8 24h1v1.04h-1zM11 24h2v1.04h-2zM15 24h1v1.04h-1zM19 24h6v1.04h-6z" fill="#000"/></svg><!--/c6--></div>
    <div class="cap" style="left:0;top:604px">模板1-无边框(65x35)</div>
    <div class="cap" style="left:521px;top:604px">模板2(65x35)</div>
    <div class="cap" style="left:1042px;top:604px">模板5(80x40)</div>
    <div class="card" style="left:10px;top:640px" id="c7"><!--c7--><svg class="abs" style="left:0;top:0;width:502px;height:260px" viewBox="0 0 502 260"><rect x="12.00" y="40.80" width="478.00" height="1.20" fill="#1a1a1a"/><rect x="12.00" y="65.60" width="401.30" height="1.20" fill="#1a1a1a"/><rect x="12.00" y="90.70" width="401.30" height="1.20" fill="#1a1a1a"/><rect x="144.80" y="41.40" width="1.20" height="82.60" fill="#1a1a1a"/><rect x="412.70" y="41.40" width="1.20" height="82.60" fill="#1a1a1a"/></svg><div class="abs" style="left:11.3px;top:15.8px;width:479.9px;height:200px;border:2.1px solid #000"></div><div class="lab" style="top:19.9px;font-size:13px;line-height:20px;letter-spacing:0.5px;color:#1a1a1a;left:202.9px;">固定资产资料卡</div><div class="lab" style="top:45.3px;font-size:13px;line-height:20px;letter-spacing:0.4px;color:#1a1a1a;left:51.6px;">资产名称</div><div class="lab" style="top:44.6px;font-size:13.2px;line-height:20px;color:#1a1a1a;left:147.0px;">DASCOM打印机</div><div class="lab" style="top:70.4px;font-size:13px;line-height:20px;letter-spacing:0.4px;color:#1a1a1a;left:51.6px;">资产编号</div><div class="lab" style="top:69.4px;font-size:13.2px;line-height:20px;color:#1a1a1a;left:147.0px;">DASCOM001</div><div class="lab" style="top:95.7px;font-size:13px;line-height:20px;letter-spacing:0.4px;color:#1a1a1a;left:51.6px;">规格型号</div><div class="lab" style="top:94.7px;font-size:13.2px;line-height:20px;color:#1a1a1a;left:147.0px;">DS-735Z</div><svg class="abs" style="left:417.9px;top:45.8px;width:67.6px;height:67.6px" viewBox="0 0 25 25"><path d="M0 0h7v1.04h-7zM9 0h2v1.04h-2zM14 0h1v1.04h-1zM18 0h7v1.04h-7zM0 1h1v1.04h-1zM6 1h1v1.04h-1zM8 1h2v1.04h-2zM11 1h1v1.04h-1zM16 1h1v1.04h-1zM18 1h1v1.04h-1zM24 1h1v1.04h-1zM0 2h1v1.04h-1zM2 2h3v1.04h-3zM6 2h1v1.04h-1zM9 2h2v1.04h-2zM13 2h2v1.04h-2zM16 2h1v1.04h-1zM18 2h1v1.04h-1zM20 2h3v1.04h-3zM24 2h1v1.04h-1zM0 3h1v1.04h-1zM2 3h3v1.04h-3zM6 3h1v1.04h-1zM9 3h2v1.04h-2zM12 3h2v1.04h-2zM15 3h2v1.04h-2zM18 3h1v1.04h-1zM20 3h3v1.04h-3zM24 3h1v1.04h-1zM0 4h1v1.04h-1zM2 4h3v1.04h-3zM6 4h1v1.04h-1zM9 4h3v1.04h-3zM13 4h3v1.04h-3zM18 4h1v1.04h-1zM20 4h3v1.04h-3zM24 4h1v1.04h-1zM0 5h1v1.04h-1zM6 5h1v1.04h-1zM8 5h4v1.04h-4zM13 5h2v1.04h-2zM18 5h1v1.04h-1zM24 5h1v1.04h-1zM0 6h7v1.04h-7zM8 6h1v1.04h-1zM10 6h1v1.04h-1zM12 6h1v1.04h-1zM14 6h1v1.04h-1zM16 6h1v1.04h-1zM18 6h7v1.04h-7zM8 7h1v1.04h-1zM10 7h1v1.04h-1zM13 7h2v1.04h-2zM16 7h1v1.04h-1zM4 8h4v1.04h-4zM11 8h1v1.04h-1zM13 8h1v1.04h-1zM16 8h1v1.04h-1zM18 8h2v1.04h-2zM23 8h1v1.04h-1zM1 9h2v1.04h-2zM4 9h2v1.04h-2zM8 9h4v1.04h-4zM13 9h2v1.04h-2zM16 9h1v1.04h-1zM18 9h3v1.04h-3zM23 9h2v1.04h-2zM1 10h6v1.04h-6zM9 10h1v1.04h-1zM18 10h2v1.04h-2zM1 11h4v1.04h-4zM7 11h2v1.04h-2zM10 11h1v1.04h-1zM12 11h1v1.04h-1zM14 11h1v1.04h-1zM16 11h3v1.04h-3zM22 11h1v1.04h-1zM0 12h1v1.04h-1zM3 12h6v1.04h-6zM13 12h1v1.04h-1zM17 12h1v1.04h-1zM24 12h1v1.04h-1zM0 13h1v1.04h-1zM3 13h3v1.04h-3zM8 13h2v1.04h-2zM13 13h1v1.04h-1zM16 13h1v1.04h-1zM18 13h3v1.04h-3zM24 13h1v1.04h-1zM2 14h1v1.04h-1zM5 14h2v1.04h-2zM8 14h4v1.04h-4zM14 14h1v1.04h-1zM16 14h2v1.04h-2zM3 15h4v1.04h-4zM9 15h1v1.04h-1zM11 15h2v1.04h-2zM22 15h2v1.04h-2zM0 16h3v1.04h-3zM4 16h4v1.04h-4zM11 16h1v1.04h-1zM15 16h6v1.04h-6zM23 16h2v1.04h-2zM8 17h3v1.04h-3zM12 17h5v1.04h-5zM20 17h3v1.04h-3zM24 17h1v1.04h-1zM0 18h7v1.04h-7zM8 18h1v1.04h-1zM10 18h1v1.04h-1zM12 18h2v1.04h-2zM15 18h2v1.04h-2zM18 18h1v1.04h-1zM20 18h1v1.04h-1zM0 19h1v1.04h-1zM6 19h1v1.04h-1zM8 19h1v1.04h-1zM10 19h1v1.04h-1zM12 19h1v1.04h-1zM14 19h1v1.04h-1zM16 19h1v1.04h-1zM20 19h1v1.04h-1zM22 19h1v1.04h-1zM0 20h1v1.04h-1zM2 20h3v1.04h-3zM6 20h1v1.04h-1zM11 20h1v1.04h-1zM13 20h2v1.04h-2zM16 20h5v1.04h-5zM0 21h1v1.04h-1zM2 21h3v1.04h-3zM6 21h1v1.04h-1zM10 21h1v1.04h-1zM13 21h1v1.04h-1zM15 21h1v1.04h-1zM21 21h2v1.04h-2zM24 21h1v1.04h-1zM0 22h1v1.04h-1zM2 22h3v1.04h-3zM6 22h1v1.04h-1zM9 22h1v1.04h-1zM15 22h1v1.04h-1zM22 22h2v1.04h-2zM0 23h1v1.04h-1zM6 23h1v1.04h-1zM10 23h2v1.04h-2zM14 23h2v1.04h-2zM21 23h3v1.04h-3zM0 24h7v1.04h-7zM8 24h1v1.04h-1zM11 24h2v1.04h-2zM15 24h1v1.04h-1zM19 24h6v1.04h-6z" fill="#000"/></svg><!--/c7--></div>
    <div class="card" style="left:531.3px;top:640px" id="c8"><!--c8--><svg class="abs" style="left:0;top:0;width:502px;height:260px" viewBox="0 0 502 260"><rect x="10.70" y="40.30" width="480.00" height="1.20" fill="#1a1a1a"/><rect x="10.70" y="65.60" width="404.30" height="1.20" fill="#1a1a1a"/><rect x="10.70" y="90.70" width="404.30" height="1.20" fill="#1a1a1a"/><rect x="147.30" y="40.90" width="1.20" height="83.10" fill="#1a1a1a"/><rect x="414.40" y="40.90" width="1.20" height="83.10" fill="#1a1a1a"/></svg><div class="abs" style="left:10.0px;top:15.0px;width:481.9px;height:200px;border:2.1px solid #000"></div><div class="lab" style="top:19.3px;font-size:14px;line-height:21px;letter-spacing:1.6px;color:#1a1a1a;left:195.6px;">固定资产资料卡</div><div class="lab" style="top:43.9px;font-size:14.5px;line-height:22px;letter-spacing:1.1px;color:#1a1a1a;left:48.2px;">资产名称</div><div class="lab" style="top:44.6px;font-size:12.8px;line-height:19px;color:#1a1a1a;left:149.8px;">DASCOM打印机</div><div class="lab" style="top:69.2px;font-size:14.5px;line-height:22px;letter-spacing:1.1px;color:#1a1a1a;left:48.2px;">资产编号</div><div class="lab" style="top:69.7px;font-size:12.8px;line-height:19px;color:#1a1a1a;left:149.8px;">DASCOM001</div><div class="lab" style="top:94.7px;font-size:14.5px;line-height:22px;letter-spacing:1.1px;color:#1a1a1a;left:48.2px;">规格型号</div><div class="lab" style="top:95.2px;font-size:12.8px;line-height:19px;color:#1a1a1a;left:149.8px;">DS-735Z</div><svg class="abs" style="left:420.2px;top:47.1px;width:65.4px;height:65.4px" viewBox="0 0 25 25"><path d="M0 0h7v1.04h-7zM9 0h2v1.04h-2zM14 0h1v1.04h-1zM18 0h7v1.04h-7zM0 1h1v1.04h-1zM6 1h1v1.04h-1zM8 1h2v1.04h-2zM11 1h1v1.04h-1zM16 1h1v1.04h-1zM18 1h1v1.04h-1zM24 1h1v1.04h-1zM0 2h1v1.04h-1zM2 2h3v1.04h-3zM6 2h1v1.04h-1zM9 2h2v1.04h-2zM13 2h2v1.04h-2zM16 2h1v1.04h-1zM18 2h1v1.04h-1zM20 2h3v1.04h-3zM24 2h1v1.04h-1zM0 3h1v1.04h-1zM2 3h3v1.04h-3zM6 3h1v1.04h-1zM9 3h2v1.04h-2zM12 3h2v1.04h-2zM15 3h2v1.04h-2zM18 3h1v1.04h-1zM20 3h3v1.04h-3zM24 3h1v1.04h-1zM0 4h1v1.04h-1zM2 4h3v1.04h-3zM6 4h1v1.04h-1zM9 4h3v1.04h-3zM13 4h3v1.04h-3zM18 4h1v1.04h-1zM20 4h3v1.04h-3zM24 4h1v1.04h-1zM0 5h1v1.04h-1zM6 5h1v1.04h-1zM8 5h4v1.04h-4zM13 5h2v1.04h-2zM18 5h1v1.04h-1zM24 5h1v1.04h-1zM0 6h7v1.04h-7zM8 6h1v1.04h-1zM10 6h1v1.04h-1zM12 6h1v1.04h-1zM14 6h1v1.04h-1zM16 6h1v1.04h-1zM18 6h7v1.04h-7zM8 7h1v1.04h-1zM10 7h1v1.04h-1zM13 7h2v1.04h-2zM16 7h1v1.04h-1zM4 8h4v1.04h-4zM11 8h1v1.04h-1zM13 8h1v1.04h-1zM16 8h1v1.04h-1zM18 8h2v1.04h-2zM23 8h1v1.04h-1zM1 9h2v1.04h-2zM4 9h2v1.04h-2zM8 9h4v1.04h-4zM13 9h2v1.04h-2zM16 9h1v1.04h-1zM18 9h3v1.04h-3zM23 9h2v1.04h-2zM1 10h6v1.04h-6zM9 10h1v1.04h-1zM18 10h2v1.04h-2zM1 11h4v1.04h-4zM7 11h2v1.04h-2zM10 11h1v1.04h-1zM12 11h1v1.04h-1zM14 11h1v1.04h-1zM16 11h3v1.04h-3zM22 11h1v1.04h-1zM0 12h1v1.04h-1zM3 12h6v1.04h-6zM13 12h1v1.04h-1zM17 12h1v1.04h-1zM24 12h1v1.04h-1zM0 13h1v1.04h-1zM3 13h3v1.04h-3zM8 13h2v1.04h-2zM13 13h1v1.04h-1zM16 13h1v1.04h-1zM18 13h3v1.04h-3zM24 13h1v1.04h-1zM2 14h1v1.04h-1zM5 14h2v1.04h-2zM8 14h4v1.04h-4zM14 14h1v1.04h-1zM16 14h2v1.04h-2zM3 15h4v1.04h-4zM9 15h1v1.04h-1zM11 15h2v1.04h-2zM22 15h2v1.04h-2zM0 16h3v1.04h-3zM4 16h4v1.04h-4zM11 16h1v1.04h-1zM15 16h6v1.04h-6zM23 16h2v1.04h-2zM8 17h3v1.04h-3zM12 17h5v1.04h-5zM20 17h3v1.04h-3zM24 17h1v1.04h-1zM0 18h7v1.04h-7zM8 18h1v1.04h-1zM10 18h1v1.04h-1zM12 18h2v1.04h-2zM15 18h2v1.04h-2zM18 18h1v1.04h-1zM20 18h1v1.04h-1zM0 19h1v1.04h-1zM6 19h1v1.04h-1zM8 19h1v1.04h-1zM10 19h1v1.04h-1zM12 19h1v1.04h-1zM14 19h1v1.04h-1zM16 19h1v1.04h-1zM20 19h1v1.04h-1zM22 19h1v1.04h-1zM0 20h1v1.04h-1zM2 20h3v1.04h-3zM6 20h1v1.04h-1zM11 20h1v1.04h-1zM13 20h2v1.04h-2zM16 20h5v1.04h-5zM0 21h1v1.04h-1zM2 21h3v1.04h-3zM6 21h1v1.04h-1zM10 21h1v1.04h-1zM13 21h1v1.04h-1zM15 21h1v1.04h-1zM21 21h2v1.04h-2zM24 21h1v1.04h-1zM0 22h1v1.04h-1zM2 22h3v1.04h-3zM6 22h1v1.04h-1zM9 22h1v1.04h-1zM15 22h1v1.04h-1zM22 22h2v1.04h-2zM0 23h1v1.04h-1zM6 23h1v1.04h-1zM10 23h2v1.04h-2zM14 23h2v1.04h-2zM21 23h3v1.04h-3zM0 24h7v1.04h-7zM8 24h1v1.04h-1zM11 24h2v1.04h-2zM15 24h1v1.04h-1zM19 24h6v1.04h-6z" fill="#000"/></svg><!--/c8--></div>
    <div id="sbar"></div>
  </div>
</div>
<div id="edge">
<div class="abs" style="left:1868.6px;top:241px;width:4px;height:280px;background:#3370ee;border-radius:3px 0 0 3px;overflow:hidden"><div style="height:48px;background:#7ec0f7"></div><div style="height:4px;background:#555c66"></div></div>
<div class="abs" style="left:1867px;top:318px;width:8px;height:13px;background:#fff;border-radius:6px 0 0 6px"></div>
<div class="abs ep" style="top:530px;height:64px"></div>
<div class="abs ep" style="top:599px;height:64px"></div>
<div class="abs ep" style="top:668px;height:60px"></div>
<div class="abs" style="left:1868.5px;top:682px;width:3px;height:9px;background:#3b6fe0"></div>
<div class="abs" style="left:1832.5px;top:425.5px;width:40px;height:38px;background:#fff;border-radius:19px 0 0 19px;box-shadow:0 1px 5px rgba(0,0,0,.12)">
<svg class="abs" style="left:3px;top:3px;width:36px;height:20px" viewBox="0 0 36 20"><path d="M1.5 15.5 C2.5 8 11 1.2 22.5 1.6 C27 1.8 30.6 3.2 31 6 C31.4 9.4 24 12 21.2 15 C20 16.4 21.4 17.4 24 17.2 C28 17 32 16 34.8 14.6 C32 17.4 26 19.2 21.6 18.8 C17.6 18.4 17 15.6 19.6 13 C22.4 10.2 27.4 8.2 27 5.8 C26.6 3.6 21.6 3.4 17.6 4.6 C11 6.6 6.4 10.6 5.4 15.4 C5 17 8 17.6 13.6 16.6 C10 18.6 2 19.6 1.5 15.5Z M9 9.8 C12 9 15.4 8.8 18.8 9 C16 9.6 12 10.2 9 9.8Z" fill="#ff5a00"/></svg>
<div class="abs" style="left:6.5px;top:24px;font-size:8.6px;line-height:10px;font-weight:bold;color:#ff5a00;letter-spacing:-.1px;white-space:nowrap">1688 Ai</div>
</div>
</div>
</body>
</html>
